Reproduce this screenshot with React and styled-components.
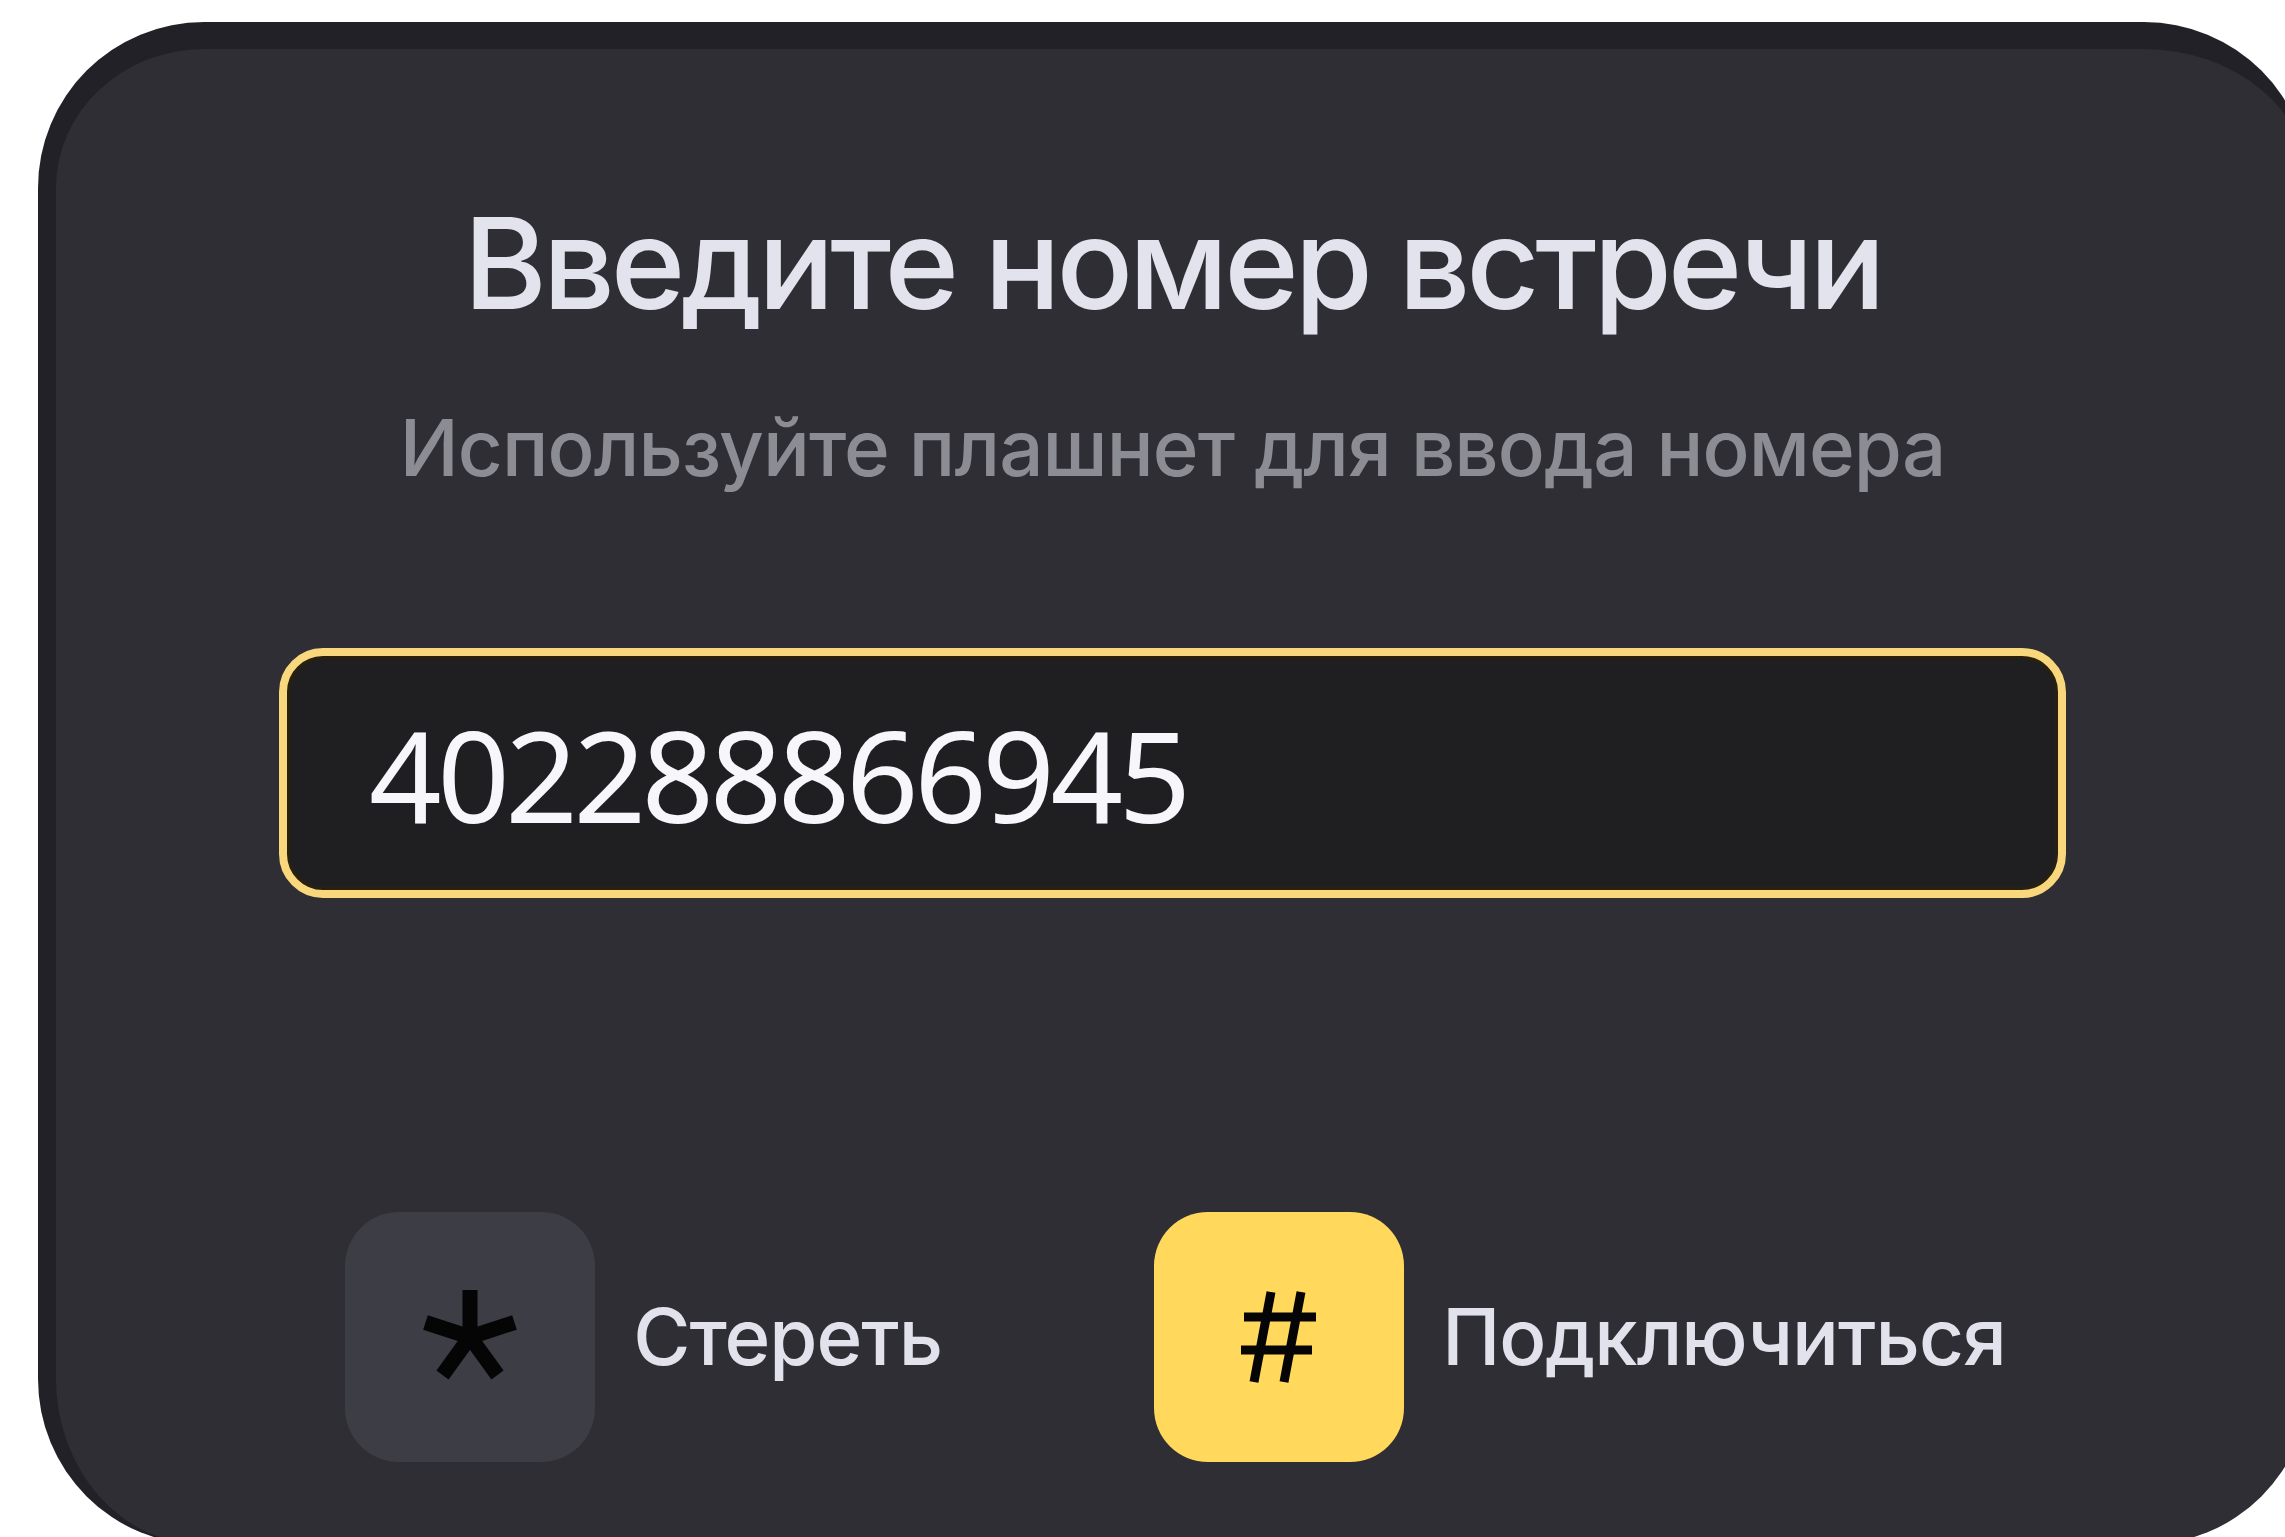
import React from "react"
import styled, { createGlobalStyle } from "styled-components"

const colors = {
  page: "#ffffff",
  card: "#2f2e35",
  cardEdge: "#222128",
  field: "#1f1f22",
  fieldBorder: "#f8d77d",
  heading: "#e3e3ed",
  muted: "#8c8c94",
  label: "#e2e2ec",
  digits: "#f6f6fb",
  keyGrey: "#3d3d45",
  keyYellow: "#ffd85c",
  glyph: "#050505",
}

const GlobalStyle = createGlobalStyle`
  html, body {
    margin: 0;
    padding: 0;
    background: ${colors.page};
    overflow: hidden;
  }
  * {
    box-sizing: border-box;
  }
`

const AsteriskIcon = () => (
  <svg width="104" height="104" viewBox="-52 -52 104 104">
    <g stroke={colors.glyph} strokeWidth="15" strokeLinecap="butt">
      <line x1="0" y1="0" x2="0" y2="-47" />
      <line x1="0" y1="0" x2="44.5" y2="-14.5" />
      <line x1="0" y1="0" x2="-44.5" y2="-14.5" />
      <line x1="0" y1="0" x2="27.5" y2="38" />
      <line x1="0" y1="0" x2="-27.5" y2="38" />
    </g>
  </svg>
)

const HashIcon = () => (
  <svg width="90" height="100" viewBox="-45 -50 90 100">
    <g stroke={colors.glyph} strokeWidth="9" strokeLinecap="butt">
      <line x1="-8" y1="-45" x2="-25" y2="45" />
      <line x1="22" y1="-45" x2="5" y2="45" />
      <line x1="-35" y1="-20" x2="37" y2="-20" />
      <line x1="-38" y1="13" x2="33" y2="13" />
    </g>
  </svg>
)

const MeetingDial = () => {
  return (
    <>
      <GlobalStyle />
      <Card>
        <Title>Введите номер встречи</Title>
        <Hint>Используйте плашнет для ввода номера</Hint>
        <NumberField>
          <span>402288866945</span>
        </NumberField>
        <Actions>
          <Action>
            <Key tone="grey">
              <AsteriskIcon />
            </Key>
            <ActionLabel>Стереть</ActionLabel>
          </Action>
          <Action>
            <Key tone="yellow">
              <HashIcon />
            </Key>
            <ActionLabel>Подключиться</ActionLabel>
          </Action>
        </Actions>
      </Card>
    </>
  )
}

const Card = styled.section`
  width: 2272px;
  height: 1523px;
  margin: 22px 0 0 38px;
  padding: 138px 244px 0 223px;
  display: flex;
  flex-direction: column;
  align-items: stretch;
  background: ${colors.card};
  border-top: 27px solid ${colors.cardEdge};
  border-left: 18px solid ${colors.cardEdge};
  border-radius: 166px;
  font-family: Inter, "Noto Sans", sans-serif;
`

const Title = styled.h1`
  margin: 0;
  font-size: 127px;
  line-height: 152px;
  font-weight: 500;
  letter-spacing: -4.3px;
  text-align: center;
  color: ${colors.heading};
`

const Hint = styled.p`
  margin: 62px 0 0;
  font-size: 78px;
  line-height: 94px;
  font-weight: 500;
  letter-spacing: -0.9px;
  text-align: center;
  color: ${colors.muted};
`

const NumberField = styled.div`
  margin-top: 153px;
  height: 250px;
  display: flex;
  align-items: center;
  padding-left: 82px;
  background: ${colors.field};
  border: 8px solid ${colors.fieldBorder};
  border-radius: 44px;
  box-shadow: inset 0 0 0 3px #2a210c;

  span {
    font-family: "Noto Sans", "Open Sans", sans-serif;
    font-size: 127px;
    line-height: 1;
    font-weight: 400;
    letter-spacing: -4.5px;
    color: ${colors.digits};
  }
`

const Actions = styled.div`
  margin-top: 314px;
  display: flex;
  justify-content: center;
  gap: 212px;
  padding-left: 6px;
`

const Action = styled.div`
  display: flex;
  align-items: center;
  gap: 38px;
`

const Key = styled.div`
  width: 250px;
  height: 250px;
  flex: none;
  display: flex;
  align-items: center;
  justify-content: center;
  border-radius: 54px;
  background: ${({ tone }) =>
    tone === "yellow" ? colors.keyYellow : colors.keyGrey};
`

const ActionLabel = styled.span`
  font-size: 78px;
  line-height: 94px;
  font-weight: 500;
  letter-spacing: -1px;
  color: ${colors.label};
`

export default function App() {
  return <MeetingDial />
}
